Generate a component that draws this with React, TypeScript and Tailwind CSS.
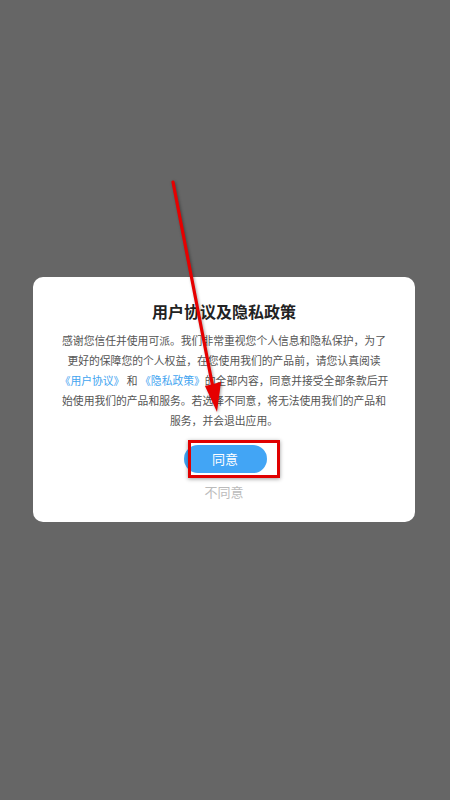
export default function App() {
  return (
    <div
      className="relative h-[800px] w-full overflow-hidden bg-[#666666] pt-[277px]"
      style={{ fontFamily: '"Noto Sans CJK SC", "Noto Sans", sans-serif' }}
    >
      <div className="ml-[33px] mr-[35px] flex flex-col items-center rounded-[10px] bg-white pb-[20px] pt-[23px]">
        <h1 className="text-[16px] font-bold leading-[22px] text-[#222]">
          用户协议及隐私政策
        </h1>
        <div className="mt-[8px] text-center text-[10.8px] leading-[20px] text-[#555]">
          <div>感谢您信任并使用可派。我们非常重视您个人信息和隐私保护，为了</div>
          <div>更好的保障您的个人权益，在您使用我们的产品前，请您认真阅读</div>
          <div>
            <span className="text-[#3fa4f0]">《用户协议》</span> 和{" "}
            <span className="text-[#3fa4f0]">《隐私政策》</span>
            的全部内容，同意并接受全部条款后开
          </div>
          <div>始使用我们的产品和服务。若选择不同意，将无法使用我们的产品和</div>
          <div>服务，并会退出应用。</div>
        </div>
        <div className="relative mt-[15px] ml-[2px]">
          <button className="flex h-[28px] w-[83px] items-center justify-center rounded-full bg-[#42a5f5] text-[13px] text-white">
            同意
          </button>
          <div className="absolute left-[4px] top-[-5px] h-[38px] w-[92px] border-[3px] border-[#e00000] shadow-[0_1px_4px_rgba(0,0,0,0.4)]" />
        </div>
        <div className="mt-[9px] text-[13px] leading-[20px] text-[#bbbbbb]">
          不同意
        </div>
      </div>

      <svg
        className="pointer-events-none absolute left-0 top-0"
        width="450"
        height="800"
        viewBox="0 0 450 800"
      >
        <g style={{ filter: "drop-shadow(1px 1px 1.5px rgba(0,0,0,0.35))" }}>
          <line
            x1="173"
            y1="182"
            x2="213"
            y2="388"
            stroke="#e60000"
            strokeWidth="3.2"
            strokeLinecap="round"
          />
          <polygon points="205,386 221,382 217,412" fill="#e60000" />
        </g>
      </svg>
    </div>
  );
}
